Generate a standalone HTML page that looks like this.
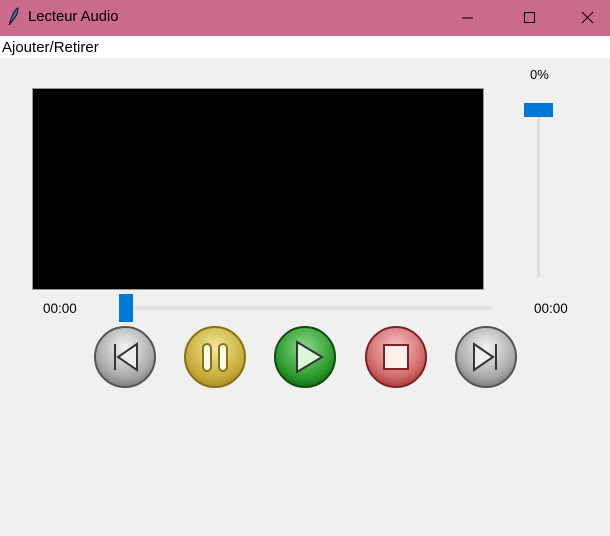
<!DOCTYPE html>
<html><head><style>
body{margin:0;width:610px;height:536px;background:#f0f0f0;font-family:"Liberation Sans",sans-serif;position:relative;overflow:hidden}
.t{position:absolute;left:0;top:0;width:610px;height:36px;background:#cb6a8b}
.t span{position:absolute;left:28px;top:9px;font-size:14.8px;color:#000}
.m{position:absolute;left:0;top:36px;width:610px;height:22px;background:#fff}
.m span{position:absolute;left:2px;top:3px;font-size:15px}
.a{position:absolute}
</style></head><body>
<div class="t"><svg class="a" style="left:6px;top:7px" width="14" height="20"><path d="M3 18 L5 12 Q8 3 12 1 Q12 8 7 13 L4 17Z" fill="#3a6fb8" stroke="#111" stroke-width="1"/></svg><span>Lecteur Audio</span>
<svg class="a" style="left:462px;top:10px" width="140" height="16"><path d="M0 8H11" stroke="#000"/><rect x="62.5" y="2.5" width="10" height="10" fill="none" stroke="#000"/><path d="M120 2L131 13M131 2L120 13" stroke="#000"/></svg></div>
<div class="m"><span>Ajouter/Retirer</span></div>
<div class="a" style="left:32px;top:88px;width:450px;height:200px;background:#000;border:1px solid #999"></div>
<div class="a" style="left:530px;top:67px;font-size:13px">0%</div>
<div class="a" style="left:537px;top:105px;width:3px;height:172px;background:#ddd"></div>
<div class="a" style="left:524px;top:103px;width:29px;height:14px;background:#0078d7"></div>
<div class="a" style="left:120px;top:306px;width:372px;height:4px;background:#e2e2e2"></div>
<div class="a" style="left:119px;top:294px;width:14px;height:28px;background:#0078d7"></div>
<div class="a" style="left:43px;top:301px;font-size:13.5px">00:00</div>
<div class="a" style="left:534px;top:301px;font-size:13.5px">00:00</div>
<svg class="a" style="left:0;top:320px" width="610" height="80">
<defs>
<radialGradient id="g" cx=".5" cy=".35" r=".7"><stop offset="0" stop-color="#f4f4f4"/><stop offset=".7" stop-color="#a8a8a8"/><stop offset="1" stop-color="#707070"/></radialGradient>
<radialGradient id="y" cx=".5" cy=".35" r=".7"><stop offset="0" stop-color="#f5e9a0"/><stop offset=".7" stop-color="#c8ac3a"/><stop offset="1" stop-color="#a08420"/></radialGradient>
<radialGradient id="gr" cx=".5" cy=".35" r=".7"><stop offset="0" stop-color="#8fd88f"/><stop offset=".7" stop-color="#2a9a2a"/><stop offset="1" stop-color="#106010"/></radialGradient>
<radialGradient id="r" cx=".5" cy=".35" r=".7"><stop offset="0" stop-color="#f6c8c8"/><stop offset=".7" stop-color="#d06868"/><stop offset="1" stop-color="#a03030"/></radialGradient>
</defs>
<g stroke-width="2">
<circle cx="125" cy="37" r="30" fill="url(#g)" stroke="#555"/>
<circle cx="215" cy="37" r="30" fill="url(#y)" stroke="#8a7010"/>
<circle cx="305" cy="37" r="30" fill="url(#gr)" stroke="#0c4c0c"/>
<circle cx="396" cy="37" r="30" fill="url(#r)" stroke="#802020"/>
<circle cx="486" cy="37" r="30" fill="url(#g)" stroke="#555"/>
</g>
<g stroke="#333" stroke-width="2">
<path d="M115 24V50M137 24L118 37L137 50Z" fill="#eee"/>
<rect x="203" y="24" width="8" height="27" rx="4" fill="#fffbe8" stroke="#8a7010"/>
<rect x="219" y="24" width="8" height="27" rx="4" fill="#fffbe8" stroke="#8a7010"/>
<path d="M297 22L322 37L297 52Z" fill="#d8f8d8"/>
<rect x="384" y="25" width="24" height="24" fill="#fff0f0" stroke="#802020"/>
<path d="M496 24V50M474 24L493 37L474 50Z" fill="#eee"/>
</g>
</svg>
</body></html>
